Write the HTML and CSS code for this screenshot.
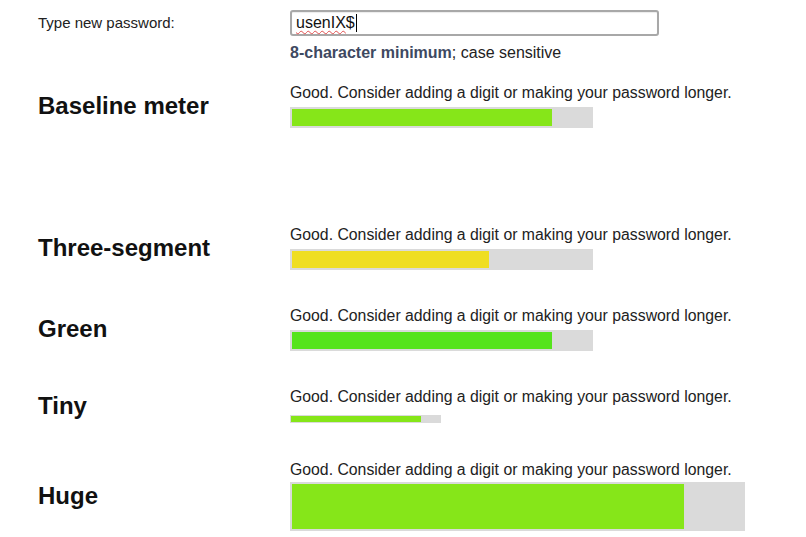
FILE: index.html
```html
<!DOCTYPE html>
<html>
<head>
<meta charset="utf-8">
<link rel="stylesheet" href="styles.css">
</head>
<body>
<div class="page">
  <div class="pw-row">
    <label class="pw-label">Type new password:</label>
    <div class="pw-field">
      <div class="pw-input"><span class="misspelled">usenIX</span>$<span class="caret"></span></div>
      <p class="hint"><strong>8-character minimum</strong>; case sensitive</p>
    </div>
  </div>

  <div class="meter-row first">
    <h2 class="meter-title">Baseline meter</h2>
    <div class="meter">
      <p class="msg">Good. Consider adding a digit or making your password longer.</p>
      <div class="track std"><div class="fill lime" style="width:260px"></div></div>
    </div>
  </div>

  <div class="meter-row">
    <h2 class="meter-title">Three-segment</h2>
    <div class="meter">
      <p class="msg">Good. Consider adding a digit or making your password longer.</p>
      <div class="track std"><div class="fill yellow" style="width:197px"></div></div>
    </div>
  </div>

  <div class="meter-row">
    <h2 class="meter-title">Green</h2>
    <div class="meter">
      <p class="msg">Good. Consider adding a digit or making your password longer.</p>
      <div class="track std"><div class="fill green" style="width:260px"></div></div>
    </div>
  </div>

  <div class="meter-row">
    <h2 class="meter-title">Tiny</h2>
    <div class="meter">
      <p class="msg">Good. Consider adding a digit or making your password longer.</p>
      <div class="track tiny"><div class="fill lime" style="width:130px"></div></div>
    </div>
  </div>

  <div class="meter-row last">
    <h2 class="meter-title">Huge</h2>
    <div class="meter">
      <p class="msg">Good. Consider adding a digit or making your password longer.</p>
      <div class="track huge"><div class="fill lime" style="width:392px"></div></div>
    </div>
  </div>
</div>
</body>
</html>
```

FILE: styles.css
```css
html, body {
  margin: 0;
  padding: 0;
  background: #ffffff;
}

body {
  font-family: "Liberation Sans", Arial, sans-serif;
  color: #222222;
}

.page {
  padding: 10px 0 0 38px;
}

.pw-row {
  display: grid;
  grid-template-columns: 252px 1fr;
}

.pw-label {
  font-size: 15px;
  line-height: 26px;
  color: #222;
}

.pw-input {
  box-sizing: border-box;
  width: 369px;
  height: 26px;
  border: 2px solid #a8a8a8;
  border-radius: 3px;
  box-shadow: inset 0 1px 1px rgba(0,0,0,0.08);
  padding: 0 4px;
  font-size: 16px;
  line-height: 22px;
  color: #111;
  display: flex;
  align-items: center;
}

.misspelled {
  text-decoration: underline wavy #e05050;
  text-decoration-thickness: 1px;
  text-underline-offset: 2px;
}

.caret {
  display: inline-block;
  width: 1px;
  height: 18px;
  background: #000;
  margin-left: 1px;
}

.hint {
  margin: 8px 0 0 0;
  font-size: 16px;
  line-height: 18px;
  color: #222;
}

.hint strong {
  color: #3e4961;
}

.meter-row {
  display: grid;
  grid-template-columns: 252px 1fr;
  align-items: center;
  margin-top: 37px;
}

.meter-row.first {
  margin-top: 22px;
  margin-bottom: 98px;
}

.meter-row.last {
  margin-top: 38px;
}

.meter-title {
  margin: 0;
  font-size: 24px;
  font-weight: bold;
  color: #111;
  line-height: 28px;
}

.msg {
  margin: 0;
  font-size: 15.8px;
  line-height: 18px;
  color: #222;
  white-space: nowrap;
}

.track {
  background: #dadada;
  box-sizing: border-box;
  margin-top: 5px;
}

.track.std {
  width: 303px;
  height: 21px;
  padding: 2px;
}

.track.tiny {
  width: 151px;
  height: 8px;
  padding: 1px;
  margin-top: 9px;
}

.track.huge {
  width: 455px;
  height: 49px;
  padding: 2px;
  margin-top: 3px;
}

.fill {
  height: 100%;
}

.fill.lime { background: #86e619; }
.fill.yellow { background: #efde22; }
.fill.green { background: #55e41c; }
```
